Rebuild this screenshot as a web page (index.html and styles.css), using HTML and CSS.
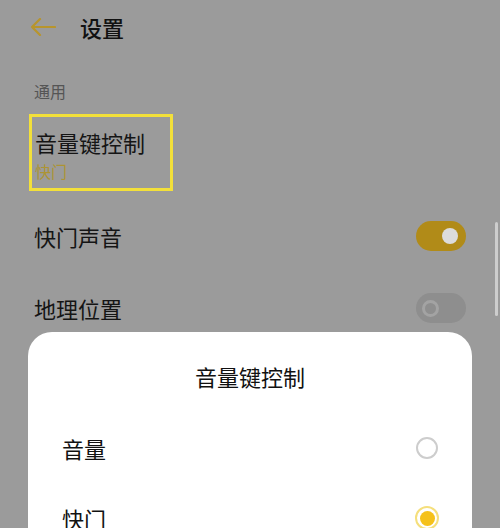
FILE: index.html
```html
<!DOCTYPE html>
<html lang="zh-CN">
<head>
<meta charset="utf-8">
<link rel="stylesheet" href="styles.css">
</head>
<body>
<div class="page">
  <header class="header">
    <svg class="back" width="26" height="18" viewBox="0 0 26 18">
      <path d="M25 9 H2 M10 1 L2 9 L10 17" fill="none" stroke="#b8952c" stroke-width="2.2" stroke-linecap="round" stroke-linejoin="round"/>
    </svg>
    <h1 class="title">设置</h1>
  </header>
  <div class="section-label">通用</div>
  <div class="highlight">
    <div class="item-title">音量键控制</div>
    <div class="item-sub">快门</div>
  </div>
  <div class="row">
    <span class="row-label">快门声音</span>
    <span class="toggle toggle-on"><span class="knob"></span></span>
  </div>
  <div class="row">
    <span class="row-label">地理位置</span>
    <span class="toggle toggle-off"><span class="knob"></span></span>
  </div>
</div>
<div class="scrollbar"></div>
<div class="dialog">
  <div class="dialog-title">音量键控制</div>
  <div class="option">
    <span class="option-label">音量</span>
    <span class="radio"></span>
  </div>
  <div class="option">
    <span class="option-label">快门</span>
    <span class="radio radio-on"><span class="dot"></span></span>
  </div>
</div>
</body>
</html>
```
FILE: styles.css
```css
* { box-sizing: border-box; }
html, body { margin: 0; padding: 0; }
body {
  width: 500px;
  height: 528px;
  overflow: hidden;
  position: relative;
  background: #9b9b9b;
  font-family: "Noto Sans CJK SC", "Noto Sans", sans-serif;
  color: #111;
}
.page {
  padding: 0 34px 0 34px;
}
.header {
  height: 54px;
  display: flex;
  align-items: center;
  margin-left: -4px;
  gap: 24px;
}
.back { display: block; }
.title {
  margin: 0;
  font-size: 22px;
  font-weight: 500;
  line-height: 30px;
}
.section-label {
  margin-top: 27px;
  font-size: 16px;
  line-height: 20px;
  color: #555;
}
.highlight {
  margin-top: 13px;
  margin-left: -5px;
  width: 144px;
  height: 77px;
  border: 3px solid #f3e03a;
  padding: 10px 0 6px 3px;
}
.item-title {
  font-size: 22px;
  line-height: 30px;
  color: #151515;
}
.item-sub {
  margin-top: 4px;
  font-size: 16px;
  line-height: 20px;
  color: #ad9433;
}
.row {
  height: 72px;
  display: flex;
  align-items: center;
  justify-content: space-between;
}
.highlight + .row { margin-top: 9px; }
.row-label {
  font-size: 22px;
  line-height: 30px;
  color: #151515;
}
.toggle {
  width: 50px;
  height: 30px;
  border-radius: 15px;
  display: flex;
  align-items: center;
  padding: 0 8px;
}
.toggle-on {
  background: #b18b18;
  justify-content: flex-end;
}
.toggle-on .knob {
  width: 16px;
  height: 16px;
  border-radius: 50%;
  background: #dcdcdc;
}
.toggle-off {
  background: #8e8e8e;
  justify-content: flex-start;
  padding-left: 6px;
}
.toggle-off .knob {
  width: 17px;
  height: 17px;
  border-radius: 50%;
  border: 3px solid #a3a3a3;
}
.scrollbar {
  position: absolute;
  left: 495px;
  top: 222px;
  width: 3px;
  height: 94px;
  border-radius: 2px;
  background: #cdcdcd;
}
.dialog {
  position: absolute;
  left: 28px;
  top: 332px;
  width: 444px;
  bottom: 0;
  overflow: hidden;
  background: #fff;
  border-radius: 24px 24px 0 0;
  padding: 29px 34px 0 34px;
}
.dialog-title {
  text-align: center;
  font-size: 22px;
  line-height: 30px;
  color: #111;
  margin-bottom: 22px;
}
.option {
  height: 70px;
  display: flex;
  align-items: center;
  justify-content: space-between;
}
.option-label {
  font-size: 22px;
  line-height: 30px;
  color: #111;
}
.radio {
  width: 22px;
  height: 22px;
  border-radius: 50%;
  border: 2px solid #cdcdcd;
  display: flex;
  align-items: center;
  justify-content: center;
}
.radio-on {
  width: 24px;
  height: 24px;
  border-color: #f5df7c;
  margin-right: -1px;
}
.radio-on .dot {
  width: 15px;
  height: 15px;
  border-radius: 50%;
  background: #f5c11b;
}
```
